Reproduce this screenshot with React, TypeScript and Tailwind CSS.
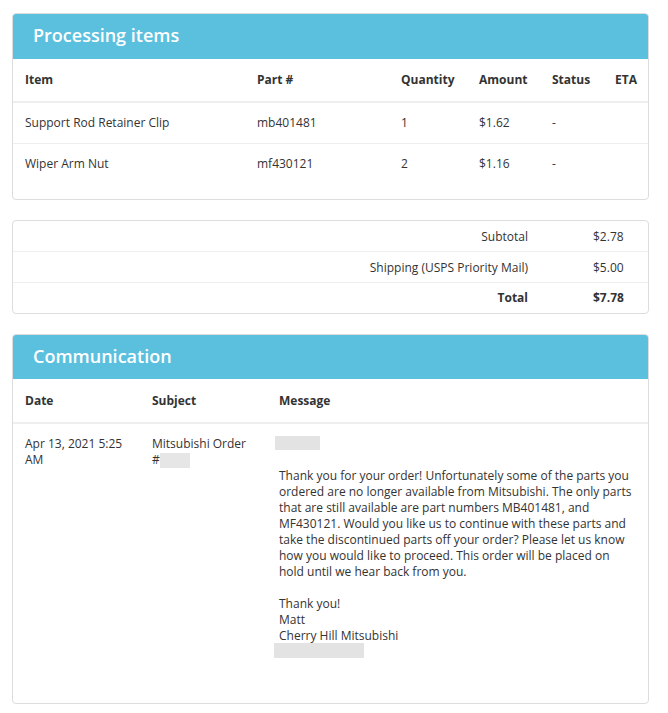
import React from 'react';

const items = [
  { name: 'Support Rod Retainer Clip', part: 'mb401481', qty: '1', amount: '$1.62', status: '-', eta: '' },
  { name: 'Wiper Arm Nut', part: 'mf430121', qty: '2', amount: '$1.16', status: '-', eta: '' },
];

function Blur({ className }: { className: string }) {
  return <span className={`block bg-[#e3e3e3] ${className}`} />;
}

export default function App() {
  return (
    <div className="min-h-screen bg-white pl-3 pr-[19px] pt-[13px] pb-3 text-[12px] leading-4 text-[#333] font-['Open_Sans',sans-serif]">
      {/* Processing items */}
      <div className="border border-[#ddd] rounded overflow-hidden">
        <div className="bg-[#5bc0de] h-[45px] flex items-center px-5 pb-1">
          <h2 className="text-white text-[18px] font-semibold">Processing items</h2>
        </div>
        <table className="w-full table-fixed text-left border-collapse mb-[15px]">
          <thead>
            <tr className="border-b-2 border-[#eee] h-[43px]">
              <th className="pl-3 w-[244px] font-bold">Item</th>
              <th className="w-[144px] font-bold">Part #</th>
              <th className="w-[78px] font-bold">Quantity</th>
              <th className="w-[73px] font-bold">Amount</th>
              <th className="w-[63px] font-bold">Status</th>
              <th className="font-bold">ETA</th>
            </tr>
          </thead>
          <tbody>
            {items.map((it, i) => (
              <tr key={it.part} className={`h-[41px] ${i === 0 ? 'border-b border-[#eee]' : ''}`}>
                <td className="pl-3">{it.name}</td>
                <td>{it.part}</td>
                <td>{it.qty}</td>
                <td>{it.amount}</td>
                <td>{it.status}</td>
                <td>{it.eta}</td>
              </tr>
            ))}
          </tbody>
        </table>
      </div>

      {/* Totals */}
      <div className="mt-[20px] border border-[#ddd] rounded">
        <div className="flex items-center h-[31px] pt-[1px] border-b border-[#eee]">
          <span className="flex-1 text-right">Subtotal</span>
          <span className="w-[120px] pl-[65px]">$2.78</span>
        </div>
        <div className="flex items-center h-[31px] pt-[1px] border-b border-[#eee]">
          <span className="flex-1 text-right">Shipping (USPS Priority Mail)</span>
          <span className="w-[120px] pl-[65px]">$5.00</span>
        </div>
        <div className="flex items-center h-[30px] font-bold">
          <span className="flex-1 text-right">Total</span>
          <span className="w-[120px] pl-[65px]">$7.78</span>
        </div>
      </div>

      {/* Communication */}
      <div className="mt-[20px] border border-[#ddd] rounded overflow-hidden">
        <div className="bg-[#5bc0de] h-[44px] flex items-center px-5 pb-[2px]">
          <h2 className="text-white text-[18px] font-semibold">Communication</h2>
        </div>
        <table className="w-full table-fixed text-left border-collapse">
          <thead>
            <tr className="border-b-2 border-[#eee] h-[44px]">
              <th className="pl-3 w-[139px] font-bold">Date</th>
              <th className="w-[127px] font-bold">Subject</th>
              <th className="font-bold">Message</th>
            </tr>
          </thead>
          <tbody>
            <tr className="align-top">
              <td className="pl-3 pt-[12px] pr-3">Apr 13, 2021 5:25 AM</td>
              <td className="pt-[12px] pr-2">
                Mitsubishi Order
                <br />
                <span className="inline-flex items-center">
                  #<span className="inline-block w-[30px] h-[15px] bg-[#e6e6e6] align-middle" />
                </span>
              </td>
              <td className="pt-[12px] pr-4 pb-[45px]">
                <Blur className="w-[45px] h-[14px] -ml-1" />
                <div className="h-[18px]" />
                <p>
                  Thank you for your order! Unfortunately some of the parts you ordered are no longer available from
                  Mitsubishi. The only parts that are still available are part numbers MB401481, and MF430121. Would
                  you like us to continue with these parts and take the discontinued parts off your order? Please let
                  us know how you would like to proceed. This order will be placed on hold until we hear back from you.
                </p>
                <p className="mt-4">
                  Thank you!
                  <br />
                  Matt
                  <br />
                  Cherry Hill Mitsubishi
                </p>
                <Blur className="w-[90px] h-[15px] -ml-[5px] -mt-[1px]" />
              </td>
            </tr>
          </tbody>
        </table>
      </div>
    </div>
  );
}
